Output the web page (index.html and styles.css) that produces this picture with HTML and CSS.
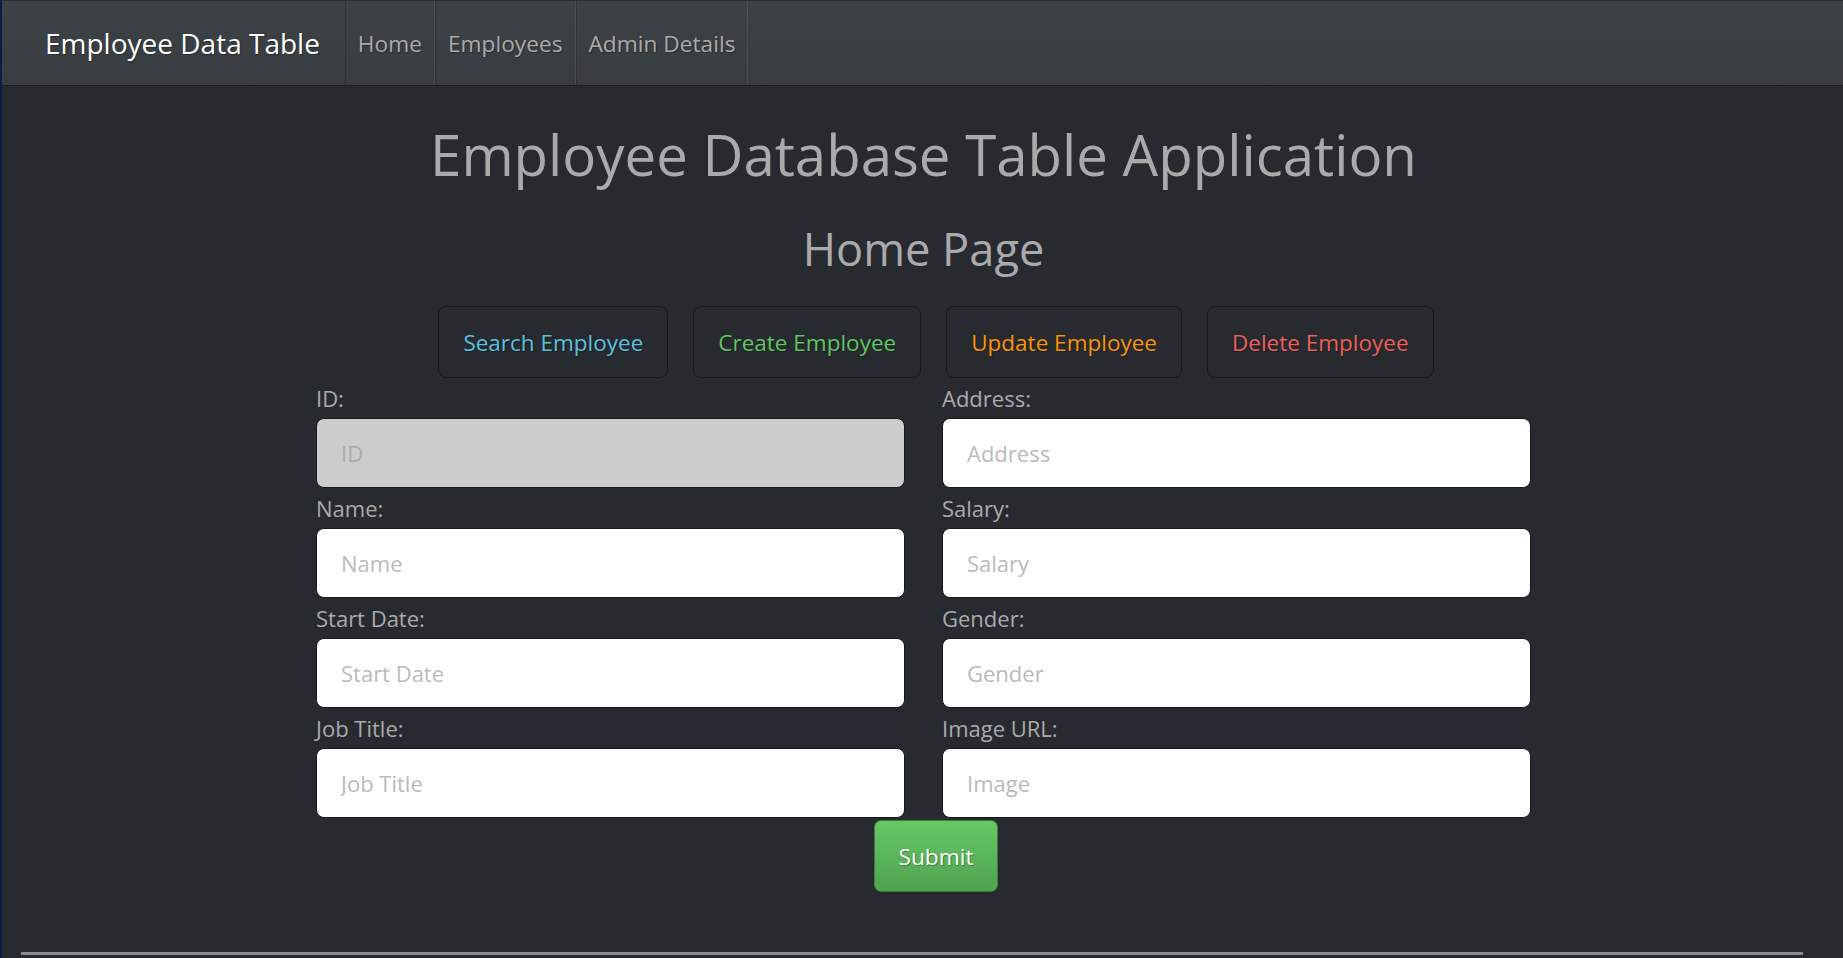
FILE: index.html
```html
<!DOCTYPE html>
<html>
<head>
<meta charset="utf-8">
<link rel="stylesheet" href="styles.css">
</head>
<body>
<div class="page">
  <nav class="navbar">
    <span class="brand">Employee Data Table</span>
    <a class="nav-link" href="#">Home</a>
    <a class="nav-link" href="#">Employees</a>
    <a class="nav-link" href="#">Admin Details</a>
  </nav>
  <main class="main">
    <h1 class="title">Employee Database Table Application</h1>
    <h2 class="subtitle">Home Page</h2>
    <div class="actions">
      <button class="action info">Search Employee</button>
      <button class="action success">Create Employee</button>
      <button class="action warning">Update Employee</button>
      <button class="action danger">Delete Employee</button>
    </div>
    <form class="form">
      <div class="field"><label>ID:</label><input class="input disabled" placeholder="ID" disabled></div>
      <div class="field"><label>Address:</label><input class="input" placeholder="Address"></div>
      <div class="field"><label>Name:</label><input class="input" placeholder="Name"></div>
      <div class="field"><label>Salary:</label><input class="input" placeholder="Salary"></div>
      <div class="field"><label>Start Date:</label><input class="input" placeholder="Start Date"></div>
      <div class="field"><label>Gender:</label><input class="input" placeholder="Gender"></div>
      <div class="field"><label>Job Title:</label><input class="input" placeholder="Job Title"></div>
      <div class="field"><label>Image URL:</label><input class="input" placeholder="Image"></div>
    </form>
    <div class="submit-row"><button class="submit" type="button">Submit</button></div>
  </main>
  <hr class="rule">
</div>
</body>
</html>
```
FILE: styles.css
```css
* { box-sizing: border-box; }
html, body { margin: 0; height: 100%; overflow: hidden; }
body {
  background: #272b30;
  color: #aaaaaa;
  font-family: "Open Sans", "Noto Sans", sans-serif;
}
.page {
  min-height: 100%;
  border-left: 2px solid #0d1a4a;
}
.navbar {
  height: 86px;
  display: flex;
  align-items: stretch;
  background: linear-gradient(#3d4247, #3a3f44 60%, #383c41);
  border-bottom: 1px solid #1c1e22;
  border-top: 1px solid #2a2e33;
}
.brand {
  display: flex;
  align-items: center;
  padding-left: 43px;
  margin-right: 25px;
  font-size: 28px;
  color: #ffffff;
  text-shadow: 1px 1px 1px rgba(0,0,0,0.3);
}
.nav-link {
  display: flex;
  align-items: center;
  padding: 0 12px;
  font-size: 22.7px;
  color: #aaaaaa;
  text-decoration: none;
  border-left: 1px solid rgba(0,0,0,0.2);
  border-right: 1px solid rgba(255,255,255,0.08);
  text-shadow: 1px 1px 1px rgba(0,0,0,0.3);
}
.main {
  width: 1215px;
  margin: 0 auto;
  transform: translateX(1px);
}
.title {
  margin: 26px 0 0;
  text-align: center;
  font-weight: 400;
  font-size: 56.4px;
  line-height: 86px;
}
.subtitle {
  margin: 21px 0 0;
  text-align: center;
  font-weight: 400;
  font-size: 45.2px;
  line-height: 60px;
}
.actions {
  display: flex;
  justify-content: center;
  gap: 25px;
  margin-top: 27px;
  padding-left: 25px;
}
.action {
  height: 72px;
  padding: 0 24px;
  background: #272b30;
  border: 1px solid #17191c;
  border-radius: 8px;
  font-family: inherit;
  font-size: 22.5px;
  text-shadow: 1px 1px 1px rgba(0,0,0,0.3);
}
.info { color: #5bc0de; }
.success { color: #62c462; }
.warning { color: #f89406; }
.danger { color: #ee5f5b; }
.form {
  display: grid;
  grid-template-columns: 1fr 1fr;
  column-gap: 37px;
}
.field { display: flex; flex-direction: column; }
.field label {
  line-height: 40px;
  height: 40px;
  font-size: 22px;
  color: #aaaaaa;
}
.input {
  height: 70px;
  border: 1px solid #17191c;
  border-radius: 8px;
  background: #ffffff;
  padding: 0 24px;
  font-family: inherit;
  font-size: 22px;
  color: #333;
}
.input::placeholder { color: #bbbbbb; }
.input.disabled { background: #cccccc; }
.input.disabled::placeholder { color: #aaaaaa; }
.submit-row {
  display: flex;
  justify-content: center;
  padding-left: 25px;
  margin-top: 2px;
}
.submit {
  width: 124px;
  height: 72px;
  border: 1px solid #3b7d3b;
  border-radius: 7px;
  background: linear-gradient(#66c866, #4fa34f);
  color: #ffffff;
  font-family: inherit;
  font-size: 22.7px;
  text-shadow: 1px 1px 1px rgba(0,0,0,0.3);
}
.rule {
  margin: 60px 40px 0 19px;
  height: 3px;
  border: 0;
  background: #8a8a8a;
}
```
